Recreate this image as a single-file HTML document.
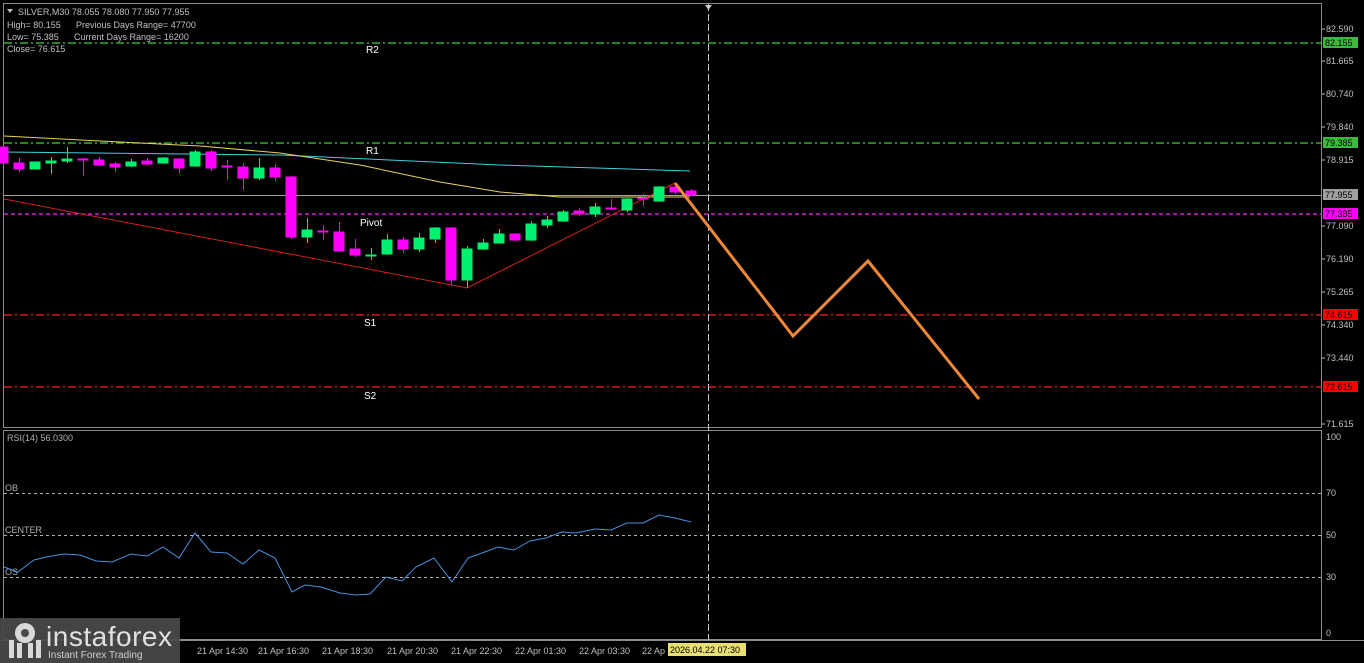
<!DOCTYPE html>
<html><head><meta charset="utf-8"><style>
html,body{margin:0;padding:0;background:#000;width:1364px;height:663px;overflow:hidden}
svg{display:block}
text{font-family:"Liberation Sans",sans-serif}
</style></head><body>
<svg width="1364" height="663" viewBox="0 0 1364 663" xmlns="http://www.w3.org/2000/svg">
<rect width="1364" height="663" fill="#000"/>
<rect x="3.5" y="3.5" width="1318" height="424" fill="none" stroke="#8a8a8a"/>
<rect x="3.5" y="430.5" width="1318" height="209" fill="none" stroke="#8a8a8a"/>
<line x1="0" y1="640.5" x2="1364" y2="640.5" stroke="#8a8a8a"/>
<g stroke-width="1.2">
<line x1="4" y1="43" x2="1322" y2="43" stroke="#3fcf3f" stroke-dasharray="8,3,2,3"/>
<line x1="4" y1="143" x2="1322" y2="143" stroke="#3fcf3f" stroke-dasharray="8,3,2,3"/>
<line x1="4" y1="214" x2="1322" y2="214" stroke="#ff20ff" stroke-dasharray="4,3"/>
<line x1="4" y1="315" x2="1322" y2="315" stroke="#ff2020" stroke-dasharray="8,3,2,3"/>
<line x1="4" y1="387" x2="1322" y2="387" stroke="#ff2020" stroke-dasharray="8,3,2,3"/>
</g>
<line x1="4" y1="195.5" x2="1322" y2="195.5" stroke="#a0a0a0"/>
<line x1="708.5" y1="4" x2="708.5" y2="640" stroke="#c8c8c8" stroke-dasharray="7,3"/>
<polygon points="705,5 712,5 708.5,10" fill="#c8c8c8"/>
<polyline points="4,152 280,155 500,165 690,171" fill="none" stroke="#40d0e0"/>
<polyline points="4,136 100,141 200,146 280,153 360,165 440,182 500,192 560,197 690,197" fill="none" stroke="#e8d060"/>
<polyline points="4,199 467,288 675,183" fill="none" stroke="#d02020"/>
<g fill="#ff00ff" stroke="#ff00ff">
<rect x="0" y="147" width="8" height="16"/>
<line x1="19.5" y1="158" x2="19.5" y2="172"/><rect x="14" y="163" width="10" height="6"/>
<line x1="83.5" y1="158" x2="83.5" y2="176"/><rect x="78" y="159" width="10" height="1"/>
<line x1="99.5" y1="157" x2="99.5" y2="166"/><rect x="94" y="160" width="10" height="5"/>
<line x1="115.5" y1="162" x2="115.5" y2="172"/><rect x="110" y="164" width="10" height="3"/>
<line x1="147.5" y1="158" x2="147.5" y2="165"/><rect x="142" y="161" width="10" height="3"/>
<line x1="179.5" y1="158" x2="179.5" y2="173"/><rect x="174" y="159" width="10" height="9"/>
<line x1="211.5" y1="150" x2="211.5" y2="171"/><rect x="206" y="152" width="10" height="16"/>
<line x1="227.5" y1="160" x2="227.5" y2="180"/><rect x="222" y="166" width="10" height="1"/>
<line x1="243.5" y1="163" x2="243.5" y2="190"/><rect x="238" y="167" width="10" height="11"/>
<line x1="275.5" y1="164" x2="275.5" y2="181"/><rect x="270" y="168" width="10" height="9"/>
<line x1="291.5" y1="176" x2="291.5" y2="239"/><rect x="286" y="177" width="10" height="60"/>
<line x1="323.5" y1="225" x2="323.5" y2="240"/><rect x="318" y="231" width="10" height="1"/>
<line x1="339.5" y1="222" x2="339.5" y2="251"/><rect x="334" y="232" width="10" height="19"/>
<line x1="355.5" y1="239" x2="355.5" y2="257"/><rect x="350" y="249" width="10" height="6"/>
<line x1="403.5" y1="237" x2="403.5" y2="253"/><rect x="398" y="240" width="10" height="9"/>
<line x1="451.5" y1="227" x2="451.5" y2="285"/><rect x="446" y="228" width="10" height="52"/>
<line x1="515.5" y1="233" x2="515.5" y2="241"/><rect x="510" y="234" width="10" height="6"/>
<line x1="579.5" y1="208" x2="579.5" y2="216"/><rect x="574" y="211" width="10" height="3"/>
<line x1="611.5" y1="199" x2="611.5" y2="210"/><rect x="606" y="208" width="10" height="1"/>
<line x1="643.5" y1="194" x2="643.5" y2="206"/><rect x="638" y="198" width="10" height="1"/>
<line x1="675.5" y1="184" x2="675.5" y2="194"/><rect x="670" y="187" width="10" height="5"/>
<line x1="691.5" y1="189" x2="691.5" y2="196"/><rect x="686" y="191" width="10" height="4"/>
</g>
<g fill="#00f070" stroke="#00f070">
<rect x="30" y="162" width="10" height="7"/>
<line x1="51.5" y1="157" x2="51.5" y2="174"/><rect x="46" y="161" width="10" height="2"/>
<line x1="67.5" y1="147" x2="67.5" y2="163"/><rect x="62" y="159" width="10" height="2"/>
<line x1="131.5" y1="159" x2="131.5" y2="167"/><rect x="126" y="162" width="10" height="4"/>
<line x1="163.5" y1="157" x2="163.5" y2="164"/><rect x="158" y="158" width="10" height="5"/>
<line x1="195.5" y1="150" x2="195.5" y2="167"/><rect x="190" y="152" width="10" height="14"/>
<line x1="259.5" y1="158" x2="259.5" y2="180"/><rect x="254" y="168" width="10" height="10"/>
<line x1="307.5" y1="218" x2="307.5" y2="243"/><rect x="302" y="230" width="10" height="7"/>
<line x1="371.5" y1="248" x2="371.5" y2="260"/><rect x="366" y="255" width="10" height="1"/>
<line x1="387.5" y1="234" x2="387.5" y2="255"/><rect x="382" y="240" width="10" height="14"/>
<line x1="419.5" y1="233" x2="419.5" y2="252"/><rect x="414" y="238" width="10" height="11"/>
<line x1="435.5" y1="227" x2="435.5" y2="243"/><rect x="430" y="228" width="10" height="11"/>
<line x1="467.5" y1="246" x2="467.5" y2="288"/><rect x="462" y="249" width="10" height="31"/>
<line x1="483.5" y1="239" x2="483.5" y2="250"/><rect x="478" y="243" width="10" height="6"/>
<line x1="499.5" y1="229" x2="499.5" y2="244"/><rect x="494" y="234" width="10" height="9"/>
<line x1="531.5" y1="221" x2="531.5" y2="241"/><rect x="526" y="224" width="10" height="16"/>
<line x1="547.5" y1="216" x2="547.5" y2="228"/><rect x="542" y="220" width="10" height="5"/>
<line x1="563.5" y1="210" x2="563.5" y2="222"/><rect x="558" y="212" width="10" height="9"/>
<line x1="595.5" y1="203" x2="595.5" y2="217"/><rect x="590" y="207" width="10" height="7"/>
<line x1="627.5" y1="198" x2="627.5" y2="212"/><rect x="622" y="199" width="10" height="11"/>
<line x1="659.5" y1="186" x2="659.5" y2="202"/><rect x="654" y="187" width="10" height="14"/>
</g>
<polyline points="675,183 793,336 868,261 979,399" fill="none" stroke="#f0883a" stroke-width="3"/>
<g fill="#fff" font-size="10">
<text x="366" y="53">R2</text><text x="366" y="154">R1</text>
<text x="360" y="226">Pivot</text><text x="364" y="326">S1</text><text x="364" y="399">S2</text>
</g>
<polygon points="7,9 13,9 10,13" fill="#c0c0c0"/>
<g fill="#c0c0c0" font-size="9">
<text x="18" y="15">SILVER,M30  78.055 78.080 77.950 77.955</text>
<text x="7" y="28">High= 80.155</text><text x="76" y="28">Previous Days Range= 47700</text>
<text x="7" y="40">Low= 75.385</text><text x="74" y="40">Current Days Range= 16200</text>
<text x="7" y="52">Close= 76.615</text>
</g>
<g fill="#c0c0c0" font-size="9">
<text x="1326" y="32">82.590</text><text x="1326" y="64">81.665</text><text x="1326" y="97">80.740</text>
<text x="1326" y="130">79.840</text><text x="1326" y="163">78.915</text><text x="1326" y="229">77.090</text>
<text x="1326" y="262">76.190</text><text x="1326" y="295">75.265</text><text x="1326" y="328">74.340</text>
<text x="1326" y="361">73.440</text><text x="1326" y="427">71.615</text>
<text x="1326" y="440">100</text><text x="1326" y="496">70</text><text x="1326" y="538">50</text>
<text x="1326" y="580">30</text><text x="1326" y="636">0</text>
</g>
<g stroke="#c0c0c0"><line x1="1322" y1="29" x2="1325" y2="29"/><line x1="1322" y1="61" x2="1325" y2="61"/><line x1="1322" y1="94" x2="1325" y2="94"/><line x1="1322" y1="127" x2="1325" y2="127"/><line x1="1322" y1="160" x2="1325" y2="160"/><line x1="1322" y1="226" x2="1325" y2="226"/><line x1="1322" y1="259" x2="1325" y2="259"/><line x1="1322" y1="292" x2="1325" y2="292"/><line x1="1322" y1="325" x2="1325" y2="325"/><line x1="1322" y1="358" x2="1325" y2="358"/><line x1="1322" y1="424" x2="1325" y2="424"/></g>
<g font-size="9">
<rect x="1323" y="37" width="35" height="11" fill="#3cb83c"/><text x="1325" y="46" fill="#000">82.155</text>
<rect x="1323" y="137" width="35" height="11" fill="#3cb83c"/><text x="1325" y="146" fill="#000">79.385</text>
<rect x="1323" y="189" width="35" height="11" fill="#a0a0a0"/><text x="1325" y="198" fill="#000">77.955</text>
<rect x="1323" y="208" width="35" height="11" fill="#ff00ff"/><text x="1325" y="217" fill="#000">77.385</text>
<rect x="1323" y="309" width="35" height="11" fill="#ff0000"/><text x="1325" y="318" fill="#000">74.615</text>
<rect x="1323" y="381" width="35" height="11" fill="#ff0000"/><text x="1325" y="390" fill="#000">72.615</text>
</g>
<g stroke="#b0b0b0" stroke-dasharray="3,3">
<line x1="4" y1="493.5" x2="1322" y2="493.5"/><line x1="4" y1="535.5" x2="1322" y2="535.5"/><line x1="4" y1="577.5" x2="1322" y2="577.5"/>
</g>
<g fill="#b0b0b0" font-size="9">
<text x="7" y="441">RSI(14) 56.0300</text><text x="5" y="491">OB</text><text x="5" y="533">CENTER</text><text x="5" y="575">OS</text>
</g>
<polyline fill="none" stroke="#4a90e0" points="4,567 18,572 34,560 46,557 64,554 80,555 96,561 112,562 131,554 147,556 163,547 179,558 195,533 211,552 227,553 243,564 259,550 275,558 292,592 305,585 321,587 340,593 356,595 370,594 386,577 402,581 416,567 434,558 452,582 468,558 482,553 498,547 514,550 530,541 546,538 562,532 576,533 595,529 611,530 627,523 643,523 659,515 675,518 691,522"/>
<g fill="#c0c0c0" font-size="9">
<text x="197" y="654">21 Apr 14:30</text><text x="258" y="654">21 Apr 16:30</text><text x="322" y="654">21 Apr 18:30</text>
<text x="387" y="654">21 Apr 20:30</text><text x="451" y="654">21 Apr 22:30</text><text x="515" y="654">22 Apr 01:30</text>
<text x="579" y="654">22 Apr 03:30</text><text x="642" y="654">22 Ap</text>
</g>
<rect x="668" y="643" width="78" height="13" fill="#e8e070"/>
<text x="670" y="653" font-size="9" fill="#000">2026.04.22 07:30</text>
<rect x="0" y="618" width="180" height="45" fill="#4a4a4a" opacity="0.92"/>
<g fill="#d8d8d8">
<circle cx="25" cy="633" r="10"/>
<rect x="9" y="640" width="5" height="18"/><rect x="17" y="643" width="5" height="15"/><rect x="28" y="643" width="5" height="15"/><rect x="36" y="640" width="5" height="18"/>
</g>
<circle cx="25" cy="633" r="4" fill="#4a4a4a"/>
<text x="46" y="646" font-size="28" fill="#e0e0e0" textLength="126">instaforex</text>
<text x="48" y="658" font-size="10" fill="#d0d0d0">Instant Forex Trading</text>
</svg>
</body></html>
